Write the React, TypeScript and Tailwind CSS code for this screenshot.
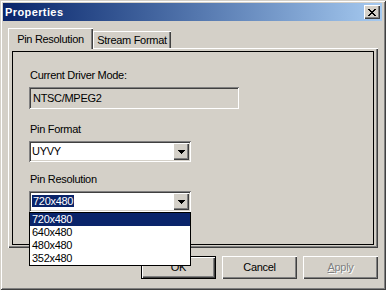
import React from 'react';

// Win2k style 3D edges
const raised = 'shadow-[inset_1px_1px_#ffffff,inset_-1px_-1px_#404040,inset_-2px_-2px_#808080]';
const sunken = 'shadow-[inset_1px_1px_#808080,inset_-1px_-1px_#ffffff,inset_2px_2px_#404040,inset_-2px_-2px_#d4d0c8]';

const CloseGlyph = () => (
  <svg width="8" height="7" viewBox="0 0 8 7" shapeRendering="crispEdges">
    <path
      d="M0 0h2v1H0zM6 0h2v1H6zM1 1h2v1H1zM5 1h2v1H5zM2 2h4v1H2zM3 3h2v1H3zM2 4h4v1H2zM1 5h2v1H1zM5 5h2v1H5zM0 6h2v1H0zM6 6h2v1H6z"
      fill="#000"
    />
  </svg>
);

const ArrowGlyph = () => (
  <svg width="7" height="4" viewBox="0 0 7 4" shapeRendering="crispEdges">
    <path d="M0 0h7v1H0zM1 1h5v1H1zM2 2h3v1H2zM3 3h1v1H3z" fill="#000" />
  </svg>
);

const DropButton = () => (
  <div className={`w-[16px] h-[17px] flex items-center justify-center bg-[#d4d0c8] ${raised}`}>
    <ArrowGlyph />
  </div>
);

const resolutions = ['720x480', '640x480', '480x480', '352x480'];

const App: React.FC = () => {
  return (
    <div className="w-[386px] h-[290px] bg-[#d4d0c8] font-['Liberation_Sans',Arial,sans-serif] text-[11px] leading-[13px] tracking-[-0.3px] text-black select-none">
      <div className="w-[386px] h-[290px] flex flex-col pt-[3px] pl-[3px] pr-[4px] pb-[4px] shadow-[inset_1px_1px_#d4d0c8,inset_-1px_-1px_#404040,inset_2px_2px_#ffffff,inset_-2px_-2px_#808080]">
        {/* Caption */}
        <div className="h-[18px] flex items-center justify-between pl-[2px] pr-[2px] bg-linear-to-r from-[#0a246a] to-[#a6caf0]">
          <span className="font-bold text-white tracking-[0.4px]">Properties</span>
          <div className={`w-[16px] h-[14px] flex items-center justify-center bg-[#d4d0c8] ${raised}`}>
            <CloseGlyph />
          </div>
        </div>

        {/* Tabs */}
        <div className="flex items-end pt-[7px] pl-[5px]">
          <div className="relative z-10 w-[85px] h-[21px] -mb-px pt-[5px] text-center bg-[#d4d0c8] shadow-[inset_1px_1px_#ffffff,inset_-1px_0_#404040,inset_-2px_0_#808080]">
            Pin Resolution
          </div>
          <div className="w-[78px] h-[17px] pt-[3px] text-center shadow-[inset_1px_1px_#ffffff,inset_-1px_0_#404040,inset_-2px_0_#808080]">
            Stream Format
          </div>
        </div>

        {/* Tab page */}
        <div className={`ml-[5px] w-[370px] h-[200px] pt-[3px] pl-[4px] ${raised}`}>
          <div className="w-[362px] h-[194px] border border-black flex flex-col items-start pt-[17px] pl-[16px]">
            <span className="ml-px">Current Driver Mode:</span>
            <div className={`mt-[5px] w-[210px] h-[22px] flex items-center pl-[4px] bg-[#d4d0c8] ${sunken}`}>
              NTSC/MPEG2
            </div>

            <span className="ml-px mt-[14px]">Pin Format</span>
            <div className={`mt-[5px] w-[162px] h-[21px] flex items-center p-[2px] bg-white ${sunken}`}>
              <span className="flex-1 pl-px">UYVY</span>
              <DropButton />
            </div>

            <span className="ml-px mt-[11px]">Pin Resolution</span>
            <div className={`relative mt-[5px] w-[162px] h-[21px] flex items-center p-[2px] bg-white ${sunken}`}>
              <div className="flex-1 pl-px">
                <span className="px-px bg-[#0a246a] text-white">720x480</span>
              </div>
              <DropButton />
              <div className="absolute left-0 top-full z-20 w-full border border-black bg-white flex flex-col">
                {resolutions.map((r, i) => (
                  <div
                    key={r}
                    className={`h-[13px] pl-[2px] ${i === 0 ? 'bg-[#0a246a] text-white' : ''}`}
                  >
                    {r}
                  </div>
                ))}
              </div>
            </div>
          </div>
        </div>

        {/* Buttons */}
        <div className="mt-[8px] flex justify-end gap-[6px] pr-[4px]">
          <div className="w-[75px] h-[23px] border border-black">
            <div className={`w-full h-full flex items-center justify-center ${raised}`}>OK</div>
          </div>
          <div className={`w-[75px] h-[23px] flex items-center justify-center ${raised}`}>Cancel</div>
          <div className={`w-[75px] h-[23px] flex items-center justify-center text-[#808080] [text-shadow:1px_1px_0_#ffffff] ${raised}`}>
            <span>
              <span className="underline">A</span>pply
            </span>
          </div>
        </div>
      </div>
    </div>
  );
};

export default App;
